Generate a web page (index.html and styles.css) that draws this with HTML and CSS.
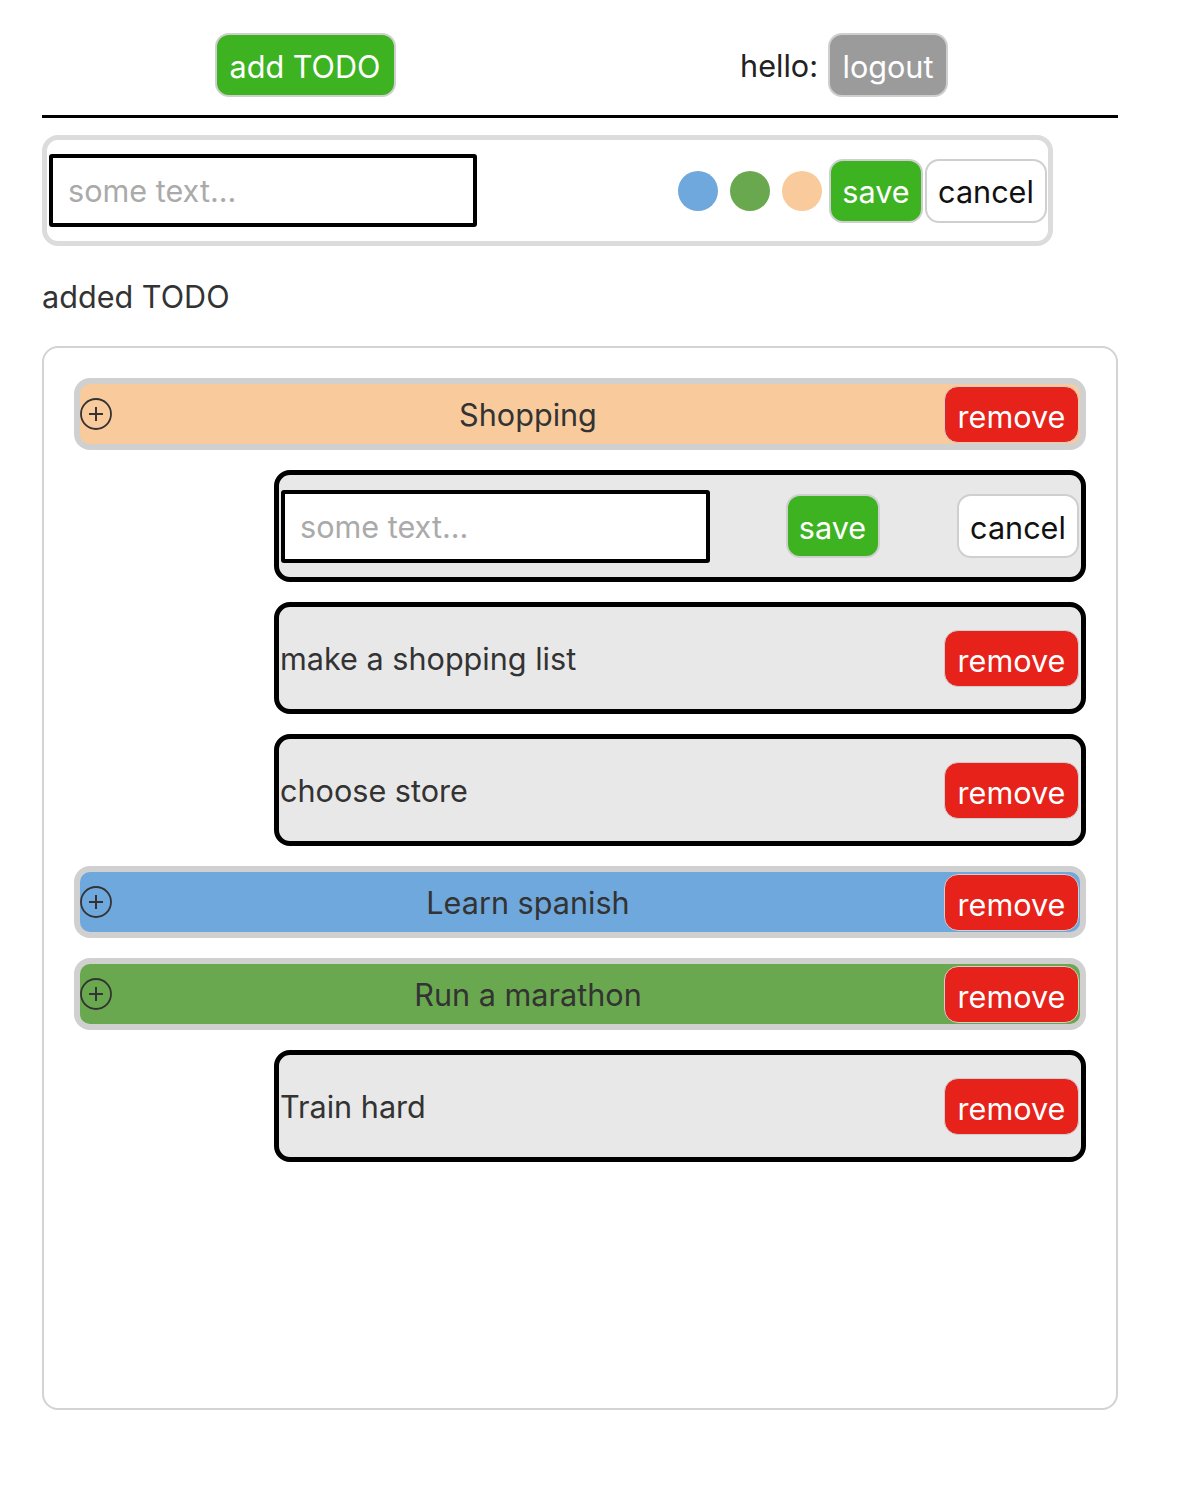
FILE: index.html
```html
<!DOCTYPE html>
<html>
<head>
<meta charset="utf-8">
<link rel="stylesheet" href="styles.css">
</head>
<body>
<div class="app">
  <header class="topbar">
    <div class="half"><button class="btn btn-green btn-add">add TODO</button></div>
    <div class="half user"><span class="hello">hello:</span><button class="btn btn-gray">logout</button></div>
  </header>

  <form class="newform">
    <input class="textin" type="text" placeholder="some text...">
    <div class="formright">
      <span class="dot dot-blue"></span>
      <span class="dot dot-green"></span>
      <span class="dot dot-peach"></span>
      <button type="button" class="btn btn-green btn-save">save</button>
      <button type="button" class="btn btn-white btn-cancel">cancel</button>
    </div>
  </form>

  <p class="status">added TODO</p>

  <section class="list">
    <div class="group peach">
      <svg class="plus" viewBox="0 0 32 32" width="32" height="32"><circle cx="16" cy="16" r="15" fill="none" stroke="#333" stroke-width="1.8"/><path d="M16 9v14M9 16h14" stroke="#333" stroke-width="2" fill="none"/></svg>
      <span class="gtitle">Shopping</span>
      <button class="btn btn-red">remove</button>
    </div>

    <div class="sub subedit">
      <input class="textin subin" type="text" placeholder="some text...">
      <button type="button" class="btn btn-green btn-save">save</button>
      <button type="button" class="btn btn-white btn-cancel">cancel</button>
    </div>

    <div class="sub">
      <span class="stext">make a shopping list</span>
      <button class="btn btn-red">remove</button>
    </div>

    <div class="sub">
      <span class="stext">choose store</span>
      <button class="btn btn-red">remove</button>
    </div>

    <div class="group blue">
      <svg class="plus" viewBox="0 0 32 32" width="32" height="32"><circle cx="16" cy="16" r="15" fill="none" stroke="#333" stroke-width="1.8"/><path d="M16 9v14M9 16h14" stroke="#333" stroke-width="2" fill="none"/></svg>
      <span class="gtitle">Learn spanish</span>
      <button class="btn btn-red">remove</button>
    </div>

    <div class="group green">
      <svg class="plus" viewBox="0 0 32 32" width="32" height="32"><circle cx="16" cy="16" r="15" fill="none" stroke="#333" stroke-width="1.8"/><path d="M16 9v14M9 16h14" stroke="#333" stroke-width="2" fill="none"/></svg>
      <span class="gtitle">Run a marathon</span>
      <button class="btn btn-red">remove</button>
    </div>

    <div class="sub">
      <span class="stext">Train hard</span>
      <button class="btn btn-red">remove</button>
    </div>
  </section>
</div>
</body>
</html>
```

FILE: styles.css
```css
* { box-sizing: border-box; }

html, body {
  margin: 0;
  padding: 0;
  background: #fff;
}

body {
  font-family: Inter, "Liberation Sans", Arial, sans-serif;
  font-size: 30.6px;
  color: #333;
}

.app {
  width: 1076px;
  margin-left: 42px;
}

.btn {
  font-family: inherit;
  font-size: 30.6px;
  height: 64px;
  border: 2px solid #cfcfcf;
  border-radius: 14px;
  padding: 4px 8px 0;
  cursor: pointer;
  line-height: 1;
}

.btn-green { background: #3db321; color: #fff; }
.btn-gray { background: #9b9b9b; color: #fff; }
.btn-white { background: #fff; color: #111; }
.btn-red {
  background: #e6221b;
  color: #fff;
  height: 57px;
  width: 135px;
  padding: 6px 0 0;
  border-width: 1px;
}

.topbar {
  display: flex;
  padding-top: 33px;
  padding-bottom: 18px;
  border-bottom: 3px solid #000;
}

.half {
  flex: 1;
  display: flex;
  justify-content: center;
  align-items: center;
}

.btn-add { width: 181px; margin-left: -22px; }

.user { margin-left: -20px; }
.hello { margin-right: 10px; color: #222; }
.btn-gray { width: 120px; }

.newform {
  margin-top: 17px;
  width: 1011px;
  height: 111px;
  border: 5px solid #dcdcdc;
  border-radius: 16px;
  display: flex;
  justify-content: space-between;
  align-items: center;
  padding: 0 1px 0 2px;
}

.textin {
  font-family: inherit;
  font-size: 30.6px;
  width: 428px;
  height: 73px;
  border: 4px solid #000;
  border-radius: 3px;
  padding: 0 15px;
  color: #333;
  background: #fff;
}

.textin::placeholder { color: #aaa; }

.formright {
  display: flex;
  align-items: center;
}

.dot {
  width: 40px;
  height: 40px;
  border-radius: 50%;
  margin-right: 12px;
}
.dot-blue { background: #6fa8dc; }
.dot-green { background: #6aa84f; }
.dot-peach { background: #f9cb9c; margin-right: 7px; }

.btn-save { width: 94px; }
.btn-cancel { width: 122px; margin-left: 2px; }

.status {
  margin: 0;
  padding: 35px 0 33px;
  line-height: 32px;
}

.list {
  border: 2px solid #d3d3d3;
  border-radius: 16px;
  min-height: 1064px;
  padding: 30px 30px;
  display: flex;
  flex-direction: column;
  gap: 20px;
}

.group {
  height: 72px;
  border: 6px solid #d0d0d0;
  border-radius: 16px;
  display: flex;
  align-items: center;
  padding: 0 1px 0 0;
}

.peach { background: #f9cb9c; }
.blue { background: #6fa8dc; }
.green { background: #6aa84f; }

.plus { flex: none; display: block; }

.gtitle {
  flex: 1;
  text-align: center;
  color: #333;
}

.sub {
  margin-left: 200px;
  height: 112px;
  border: 5px solid #000;
  border-radius: 16px;
  background: #e8e8e8;
  display: flex;
  align-items: center;
  justify-content: space-between;
  padding: 0 2px 0 1px;
}

.stext { color: #333; }

.subedit { padding-left: 2px; }
.subin { width: 429px; }
```
